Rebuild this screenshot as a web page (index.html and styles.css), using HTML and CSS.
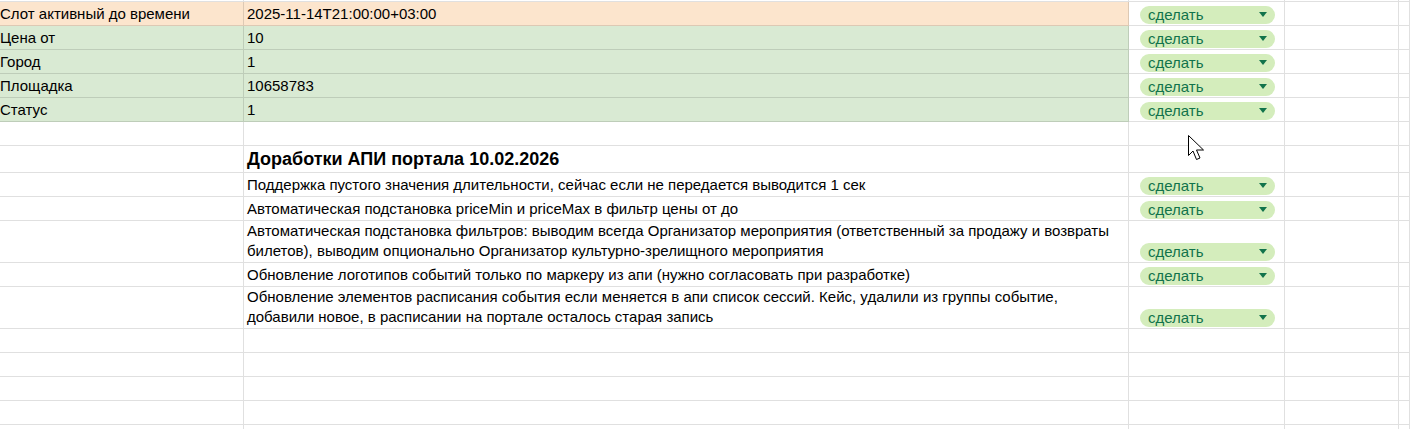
FILE: index.html
```html
<!DOCTYPE html>
<html lang="ru">
<head>
<meta charset="utf-8">
<title>Sheet</title>
<link rel="stylesheet" href="styles.css">
</head>
<body>
<div class="sheet">
  <div class="row r-top"><div class="cell"></div><div class="cell"></div><div class="cell"></div><div class="cell"></div><div class="cell"></div></div>

  <div class="row peach"><div class="cell fill">Слот активный до времени</div><div class="cell fill">2025-11-14T21:00:00+03:00</div><div class="cell"><span class="chip"><span class="chip-text">сделать</span><span class="caret"></span></span></div><div class="cell"></div><div class="cell"></div></div>
  <div class="row green"><div class="cell fill">Цена от</div><div class="cell fill">10</div><div class="cell"><span class="chip"><span class="chip-text">сделать</span><span class="caret"></span></span></div><div class="cell"></div><div class="cell"></div></div>
  <div class="row green"><div class="cell fill">Город</div><div class="cell fill">1</div><div class="cell"><span class="chip"><span class="chip-text">сделать</span><span class="caret"></span></span></div><div class="cell"></div><div class="cell"></div></div>
  <div class="row green"><div class="cell fill">Площадка</div><div class="cell fill">10658783</div><div class="cell"><span class="chip"><span class="chip-text">сделать</span><span class="caret"></span></span></div><div class="cell"></div><div class="cell"></div></div>
  <div class="row green"><div class="cell fill">Статус</div><div class="cell fill">1</div><div class="cell"><span class="chip"><span class="chip-text">сделать</span><span class="caret"></span></span></div><div class="cell"></div><div class="cell"></div></div>

  <div class="row"><div class="cell"></div><div class="cell"></div><div class="cell"></div><div class="cell"></div><div class="cell"></div></div>

  <div class="row r-head"><div class="cell"></div><div class="cell head">Доработки АПИ портала 10.02.2026</div><div class="cell"></div><div class="cell"></div><div class="cell"></div></div>

  <div class="row"><div class="cell"></div><div class="cell">Поддержка пустого значения длительности, сейчас если не передается выводится 1 сек</div><div class="cell"><span class="chip"><span class="chip-text">сделать</span><span class="caret"></span></span></div><div class="cell"></div><div class="cell"></div></div>
  <div class="row"><div class="cell"></div><div class="cell">Автоматическая подстановка priceMin и priceMax в фильтр цены от до</div><div class="cell"><span class="chip"><span class="chip-text">сделать</span><span class="caret"></span></span></div><div class="cell"></div><div class="cell"></div></div>
  <div class="row r-tall"><div class="cell"></div><div class="cell">Автоматическая подстановка фильтров: выводим всегда Организатор мероприятия (ответственный за продажу и возвраты<br>билетов), выводим опционально Организатор культурно-зрелищного мероприятия</div><div class="cell"><span class="chip"><span class="chip-text">сделать</span><span class="caret"></span></span></div><div class="cell"></div><div class="cell"></div></div>
  <div class="row"><div class="cell"></div><div class="cell">Обновление логотипов событий только по маркеру из апи (нужно согласовать при разработке)</div><div class="cell"><span class="chip"><span class="chip-text">сделать</span><span class="caret"></span></span></div><div class="cell"></div><div class="cell"></div></div>
  <div class="row r-tall"><div class="cell"></div><div class="cell">Обновление элементов расписания события если меняется в апи список сессий. Кейс, удалили из группы событие,<br>добавили новое, в расписании на портале осталось старая запись</div><div class="cell"><span class="chip"><span class="chip-text">сделать</span><span class="caret"></span></span></div><div class="cell"></div><div class="cell"></div></div>

  <div class="row"><div class="cell"></div><div class="cell"></div><div class="cell"></div><div class="cell"></div><div class="cell"></div></div>
  <div class="row"><div class="cell"></div><div class="cell"></div><div class="cell"></div><div class="cell"></div><div class="cell"></div></div>
  <div class="row"><div class="cell"></div><div class="cell"></div><div class="cell"></div><div class="cell"></div><div class="cell"></div></div>
  <div class="row"><div class="cell"></div><div class="cell"></div><div class="cell"></div><div class="cell"></div><div class="cell"></div></div>
  <div class="row"><div class="cell"></div><div class="cell"></div><div class="cell"></div><div class="cell"></div><div class="cell"></div></div>
</div>

<svg class="cursor" width="20" height="28" viewBox="0 0 20 28" aria-hidden="true">
  <path d="M0.5 0.5 L0.5 20.5 L5 16 L8.5 24.5 L12 23 L8.5 15 L15.5 15 Z" fill="#fff" stroke="#000" stroke-width="1" stroke-linejoin="miter"/>
</svg>
</body>
</html>
```
FILE: styles.css
```css
html, body {
  margin: 0;
  padding: 0;
  background: #ffffff;
  overflow: hidden;
}

body {
  width: 1410px;
  height: 429px;
  position: relative;
  font-family: "Liberation Sans", Arial, sans-serif;
  font-size: 15px;
  color: #000;
}

.sheet {
  margin-left: -3px;
  display: flex;
  flex-direction: column;
}

.row {
  display: grid;
  grid-template-columns: 247px 885px 156px 114px 1fr;
  height: 24px;
}

.r-top { height: 2px; }
.r-head { height: 27px; }
.r-tall { height: 42px; }

.cell {
  box-sizing: border-box;
  border-right: 1px solid rgba(0, 0, 0, 0.12);
  border-bottom: 1px solid rgba(0, 0, 0, 0.12);
  display: flex;
  align-items: flex-end;
  padding: 0 3px 1px;
  line-height: 20px;
  white-space: nowrap;
  overflow: visible;
  min-width: 0;
}

.peach .fill { background: #fce5cd; }
.green .fill { background: #d9ead3; }

.head {
  font-weight: bold;
  font-size: 18px;
  line-height: 22px;
  padding-bottom: 2px;
}

.chip {
  box-sizing: border-box;
  display: flex;
  align-items: center;
  justify-content: space-between;
  width: 135px;
  height: 18px;
  margin: 0 0 0 8px;
  padding: 0 8px;
  border-radius: 9px;
  background: #d4edbc;
  color: #11734b;
  font-size: 15px;
  line-height: 18px;
}

.caret {
  width: 0;
  height: 0;
  border-left: 4px solid transparent;
  border-right: 4px solid transparent;
  border-top: 5px solid #11734b;
  margin-top: -2px;
}

.cursor {
  position: absolute;
  left: 1188px;
  top: 135px;
}
```
